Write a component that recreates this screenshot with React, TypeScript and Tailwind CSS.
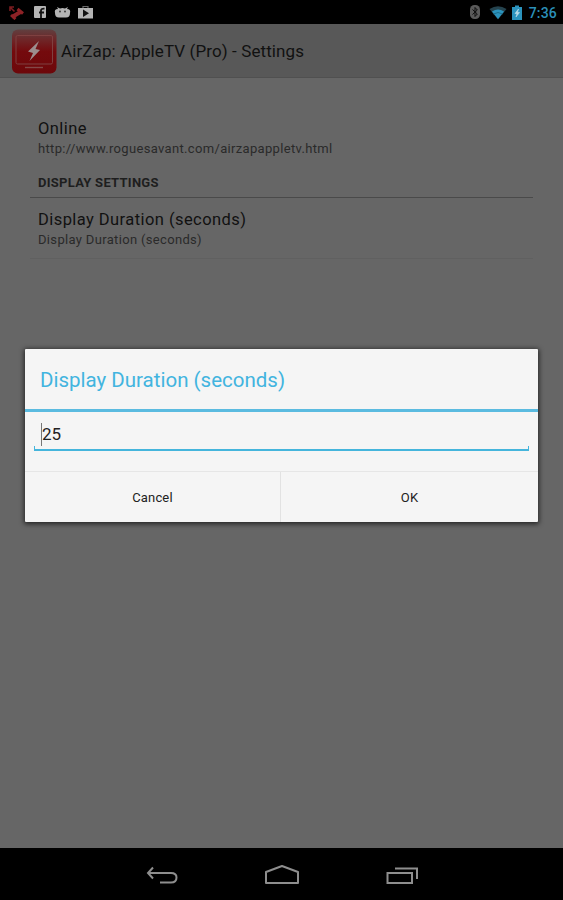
import { useState } from "react";

type Preference = { title: string; summary: string };

const ONLINE: Preference = {
  title: "Online",
  summary: "http://www.roguesavant.com/airzapappletv.html",
};

const DURATION: Preference = {
  title: "Display Duration (seconds)",
  summary: "Display Duration (seconds)",
};

function StatusBar() {
  return (
    <div className="flex h-6 shrink-0 items-center justify-between bg-black pl-[9px] pr-[6px]">
      <div className="flex items-center">
        {/* Missed call */}
        <svg width="15" height="16" viewBox="0 0 15 16" className="mr-[10px]">
          <path d="M3 13 L11.500 8" stroke="#8e2226" strokeWidth="4" fill="none" />
          <path d="M1 3 L5.500 7.500 M1 7 V3 H5" stroke="#7c1c20" strokeWidth="1.6" fill="none" />
          <path d="M8.500 5 L14 9.500 M2 11 L6.500 15" stroke="#8e2226" strokeWidth="3" fill="none" />
        </svg>
        {/* Facebook */}
        <svg width="12" height="12" viewBox="0 0 12 12" className="mr-2">
          <rect width="12" height="12" rx="1" fill="#b4b4b4" />
          <path d="M7 12 V4.5 Q7 2.5 10.5 2.7 M5 6.5 H10" stroke="#111" strokeWidth="1.8" fill="none" />
        </svg>
        {/* Android head */}
        <svg width="17" height="14" viewBox="0 0 17 14" className="mr-[7px]">
          <path d="M1 8 Q0 4 4 4 L3 2 L6 3.5 Q8.5 2.6 11 3.5 L14 2 L13 4 Q17 4 16 8 Q16 12.500 12 12.500 H5 Q1 12.500 1 8Z" fill="#b4b4b4" />
          <circle cx="6" cy="6.500" r="0.9" fill="#333" />
          <circle cx="11" cy="6.500" r="0.9" fill="#333" />
        </svg>
        {/* Play Store */}
        <svg width="15" height="15" viewBox="0 0 15 15">
          <path d="M5 4 V1.500 H10 V4" stroke="#6a6a6a" strokeWidth="1.2" fill="none" />
          <path d="M0 3 H15 V13.500 H0Z" fill="#b4b4b4" />
          <path d="M5 4.500 L11 8.300 L5 12Z" fill="#111" />
        </svg>
      </div>
      <div className="flex items-center">
        {/* Bluetooth */}
        <svg width="10" height="14" viewBox="0 0 10 14" className="mr-[9px]">
          <rect width="10" height="14" rx="4.500" fill="#5a5a5a" />
          <path d="M2.500 4.500 L7.300 9 L5 11.500 V2.500 L7.300 5 L2.500 9.500" stroke="#0c0c0c" strokeWidth="1" fill="none" />
        </svg>
        {/* Wi-Fi */}
        <svg width="18" height="15" viewBox="0 0 18 15" className="mr-[5px]">
          <path d="M0.500 4 Q9 -1.500 17.500 4 L9 14.500Z" fill="#25434e" />
          <path d="M3 6.500 Q9 2.500 15 6.500 L9 14Z" fill="#2b93bd" />
          <path d="M4.500 9 Q9 6 13.500 9" stroke="#17627f" strokeWidth="0.8" fill="none" />
        </svg>
        {/* Battery, charging */}
        <svg width="10" height="15" viewBox="0 0 10 15" className="mr-[7px]">
          <path d="M3 0.500 H7 V2 H10 V15 H0 V2 H3Z" fill="#2b93bd" />
          <path d="M6.500 4 L3 8.500 H5 L4 12 L7.500 7.500 H5.500Z" fill="#b9dce8" stroke="#b9dce8" strokeWidth="0.6" />
        </svg>
        <span className="pt-[2px] text-[14px] font-medium leading-[22px] tracking-[0.2px] text-[#2b8fb8]">7:36</span>
      </div>
    </div>
  );
}

function AppIcon() {
  return (
    <svg width="46" height="46" viewBox="0 0 46 46" className="shrink-0">
      <defs>
        <linearGradient id="tile" x1="0" y1="0" x2="0" y2="1">
          <stop offset="0" stopColor="#603f3f" />
          <stop offset="0.25" stopColor="#6f2426" />
          <stop offset="0.5" stopColor="#740a0d" />
          <stop offset="1" stopColor="#6d080b" />
        </linearGradient>
      </defs>
      <rect x="1" y="1.500" width="44.500" height="44" rx="6" fill="url(#tile)" />
      <rect x="5" y="7.500" width="36.500" height="28.500" rx="1.500" fill="none" stroke="#7f4040" strokeWidth="1" />
      <path d="M14 39.500 H32" stroke="#834848" strokeWidth="1.400" />
      <path d="M28 13 L17 23.500 L22 25 L18.500 33 L29 22 L24.500 21Z" fill="#9c8e8e" />
    </svg>
  );
}

function PreferenceRow({ title, summary }: Preference) {
  return (
    <div className="px-2 pt-px">
      <div className="text-[16.500px] leading-[21px] tracking-[0.430px] text-[#111]">{title}</div>
      <div className="text-[13px] leading-5 tracking-[0.330px] text-[#2a2a2a]">{summary}</div>
    </div>
  );
}

function NavBar() {
  return (
    <div className="flex h-[52px] shrink-0 items-center justify-center gap-[87px] bg-black pt-[2px]">
      <svg width="32" height="20" viewBox="0 0 32 20" fill="none" stroke="#8e8e8e" strokeWidth="2">
        <path d="M7 2.500 L2 8 L7 13.500 M2 8 H25 Q30.500 8 30.500 12.500 Q30.500 17.500 25 17.500 H14" />
      </svg>
      <svg width="34" height="20" viewBox="0 0 34 20" fill="none" stroke="#8e8e8e" strokeWidth="2" strokeLinejoin="round">
        <path d="M1 18 V7 L17 1 L33 7 V18Z" />
      </svg>
      <svg width="32" height="20" viewBox="0 0 32 20" fill="none" stroke="#8e8e8e" strokeWidth="2">
        <path d="M1.500 8 H26 V18 H1.500Z M9 3.500 H31 V14" />
      </svg>
    </div>
  );
}

function DurationDialog() {
  const [seconds, setSeconds] = useState("25");

  return (
    <div className="absolute left-[25px] top-[349px] flex h-[173px] w-[513px] flex-col rounded-[1px] bg-[#f5f5f5] shadow-[0_1px_5px_1px_rgba(0,0,0,0.65)]">
      <h2 className="h-[63px] border-b-[3px] border-[#5bbbe0] pl-[15px] text-[20.500px] leading-[63px] text-[#42b4df]">
        {DURATION.title}
      </h2>
      <div className="h-[59px] px-[9px] pt-[7px]">
        <div className="relative flex h-8 items-center border-b-2 border-[#45b5dc] pl-[7px]">
          <span className="h-[23px] w-px bg-[#777]" />
          <input
            value={seconds}
            onChange={(e) => setSeconds(e.target.value)}
            className="w-40 bg-transparent text-[17px] leading-6 text-[#222] outline-none"
          />
          <span className="absolute bottom-0 left-0 h-[3px] w-px bg-[#45b5dc]" />
          <span className="absolute bottom-0 right-0 h-[3px] w-px bg-[#45b5dc]" />
        </div>
      </div>
      <div className="flex flex-1 border-t border-[#e6e6e6] text-[13px] tracking-[0.150px] text-[#222]">
        <button className="w-[256px] border-r border-[#e2e2e2] pt-px">Cancel</button>
        <button className="flex-1 pt-px">OK</button>
      </div>
    </div>
  );
}

export default function App() {
  return (
    <div className="relative flex h-[900px] w-[563px] flex-col overflow-hidden bg-[#666] font-['Roboto',sans-serif]">
      <StatusBar />
      <header className="flex h-[54px] shrink-0 items-center border-b border-[#505050] bg-[#585858] pl-[11px]">
        <AppIcon />
        <h1 className="ml-1 pt-[2px] text-[17px] tracking-[0.100px] text-[#111]">AirZap: AppleTV (Pro) - Settings</h1>
      </header>
      <main className="flex-1 px-[30px] pt-[39px]">
        <PreferenceRow {...ONLINE} />
        <div className="mt-[14px] h-[25px] border-b border-[#4a4a4a] px-2 text-[13px] font-bold leading-[20px] tracking-[0.270px] text-[#1e1e1e]">
          DISPLAY SETTINGS
        </div>
        <div className="mt-[10px] border-b border-[#606060] pb-2">
          <PreferenceRow {...DURATION} />
        </div>
      </main>
      <NavBar />
      <DurationDialog />
    </div>
  );
}
